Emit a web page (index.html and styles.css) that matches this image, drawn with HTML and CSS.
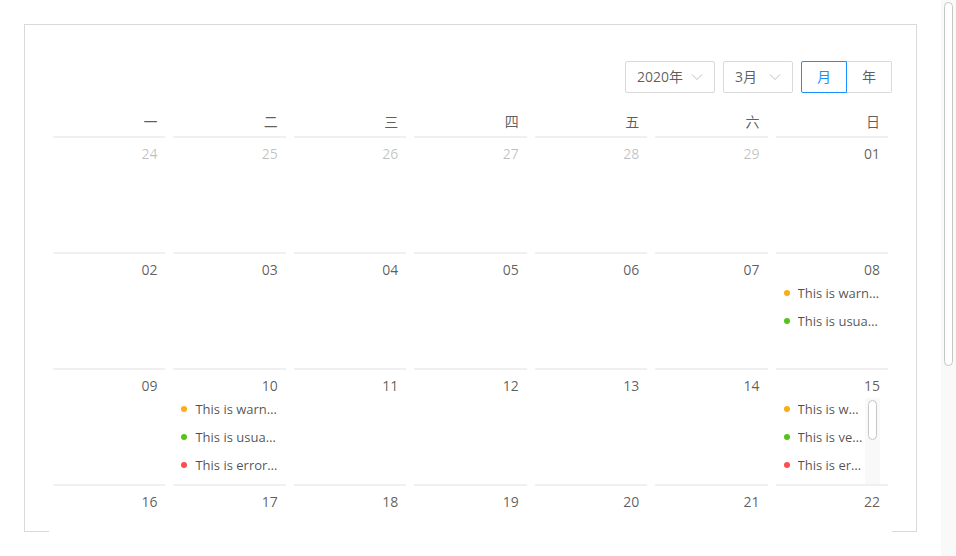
FILE: index.html
```html
<!DOCTYPE html>
<html lang="zh">
<head>
<meta charset="utf-8">
<title>Calendar</title>
<link rel="stylesheet" href="styles.css">
</head>
<body>
<div class="page">
  <div class="box">
    <div class="calendar">
      <div class="cal-header">
        <div class="select select-year"><span class="select-text">2020年</span><svg class="chev" width="12" height="12" viewBox="0 0 12 12"><polyline points="1,3.5 6,8.5 11,3.5" fill="none" stroke="#bfbfbf" stroke-width="1"/></svg></div>
        <div class="select select-month"><span class="select-text">3月</span><svg class="chev" width="12" height="12" viewBox="0 0 12 12"><polyline points="1,3.5 6,8.5 11,3.5" fill="none" stroke="#bfbfbf" stroke-width="1"/></svg></div>
        <div class="radio-group">
          <span class="radio-btn radio-checked">月</span>
          <span class="radio-btn">年</span>
        </div>
      </div>
      <div class="cal-body">
        <div class="grid">
          <div class="th">一</div><div class="th">二</div><div class="th">三</div><div class="th">四</div><div class="th">五</div><div class="th">六</div><div class="th">日</div>

          <div class="cell muted"><div class="val">24</div><div class="content"></div></div>
          <div class="cell muted"><div class="val">25</div><div class="content"></div></div>
          <div class="cell muted"><div class="val">26</div><div class="content"></div></div>
          <div class="cell muted"><div class="val">27</div><div class="content"></div></div>
          <div class="cell muted"><div class="val">28</div><div class="content"></div></div>
          <div class="cell muted"><div class="val">29</div><div class="content"></div></div>
          <div class="cell"><div class="val">01</div><div class="content"></div></div>

          <div class="cell"><div class="val">02</div><div class="content"></div></div>
          <div class="cell"><div class="val">03</div><div class="content"></div></div>
          <div class="cell"><div class="val">04</div><div class="content"></div></div>
          <div class="cell"><div class="val">05</div><div class="content"></div></div>
          <div class="cell"><div class="val">06</div><div class="content"></div></div>
          <div class="cell"><div class="val">07</div><div class="content"></div></div>
          <div class="cell"><div class="val">08</div><div class="content">
            <ul class="events">
              <li class="ev"><span class="dot warning"></span><span class="ev-text">This is warning event.</span></li>
              <li class="ev"><span class="dot success"></span><span class="ev-text">This is usual event.</span></li>
            </ul>
          </div></div>

          <div class="cell"><div class="val">09</div><div class="content"></div></div>
          <div class="cell"><div class="val">10</div><div class="content">
            <ul class="events">
              <li class="ev"><span class="dot warning"></span><span class="ev-text">This is warning event.</span></li>
              <li class="ev"><span class="dot success"></span><span class="ev-text">This is usual event.</span></li>
              <li class="ev"><span class="dot error"></span><span class="ev-text">This is error event.</span></li>
            </ul>
          </div></div>
          <div class="cell"><div class="val">11</div><div class="content"></div></div>
          <div class="cell"><div class="val">12</div><div class="content"></div></div>
          <div class="cell"><div class="val">13</div><div class="content"></div></div>
          <div class="cell"><div class="val">14</div><div class="content"></div></div>
          <div class="cell"><div class="val">15</div><div class="content content-scroll">
            <ul class="events events-clip">
              <li class="ev"><span class="dot warning"></span><span class="ev-text">This is warning event</span></li>
              <li class="ev"><span class="dot success"></span><span class="ev-text">This is very long usual event。。....</span></li>
              <li class="ev"><span class="dot error"></span><span class="ev-text">This is error event 1.</span></li>
              <li class="ev"><span class="dot error"></span><span class="ev-text">This is error event 2.</span></li>
              <li class="ev"><span class="dot error"></span><span class="ev-text">This is error event 3.</span></li>
              <li class="ev"><span class="dot error"></span><span class="ev-text">This is error event 4.</span></li>
            </ul>
            <div class="mini-track"><div class="mini-thumb"></div></div>
          </div></div>

          <div class="cell"><div class="val">16</div><div class="content"></div></div>
          <div class="cell"><div class="val">17</div><div class="content"></div></div>
          <div class="cell"><div class="val">18</div><div class="content"></div></div>
          <div class="cell"><div class="val">19</div><div class="content"></div></div>
          <div class="cell"><div class="val">20</div><div class="content"></div></div>
          <div class="cell"><div class="val">21</div><div class="content"></div></div>
          <div class="cell"><div class="val">22</div><div class="content"></div></div>

          <div class="cell"><div class="val">23</div><div class="content"></div></div>
          <div class="cell"><div class="val">24</div><div class="content"></div></div>
          <div class="cell"><div class="val">25</div><div class="content"></div></div>
          <div class="cell"><div class="val">26</div><div class="content"></div></div>
          <div class="cell"><div class="val">27</div><div class="content"></div></div>
          <div class="cell"><div class="val">28</div><div class="content"></div></div>
          <div class="cell"><div class="val">29</div><div class="content"></div></div>

          <div class="cell"><div class="val">30</div><div class="content"></div></div>
          <div class="cell"><div class="val">31</div><div class="content"></div></div>
          <div class="cell muted"><div class="val">01</div><div class="content"></div></div>
          <div class="cell muted"><div class="val">02</div><div class="content"></div></div>
          <div class="cell muted"><div class="val">03</div><div class="content"></div></div>
          <div class="cell muted"><div class="val">04</div><div class="content"></div></div>
          <div class="cell muted"><div class="val">05</div><div class="content"></div></div>
        </div>
      </div>
    </div>
  </div>
</div>
<div class="vscroll"><div class="vthumb"></div></div>
</body>
</html>
```

FILE: styles.css
```css
html, body {
  margin: 0;
  padding: 0;
  background: #fff;
  height: 556px;
  overflow: hidden;
}

body {
  display: flex;
  font-family: "Open Sans", "Noto Sans CJK SC", sans-serif;
  font-size: 14px;
  color: rgba(0, 0, 0, 0.65);
}

.page {
  flex: 1;
  min-width: 0;
  height: 556px;
  overflow: hidden;
  box-sizing: border-box;
  padding: 24px;
}

.vscroll {
  flex: none;
  box-sizing: border-box;
  width: 15px;
  height: 556px;
  background: #f9f9f9;
  padding: 2px 3px 0 3px;
}

.vthumb {
  box-sizing: border-box;
  height: 364px;
  border: 1px solid #c6c6c6;
  border-radius: 5px;
  background: #fff;
}

.box {
  box-sizing: border-box;
  height: 508px;
  border: 1px solid #d9d9d9;
  padding: 24px;
}

.calendar {
  background: #fff;
}

.cal-header {
  display: flex;
  justify-content: flex-end;
  gap: 8px;
  padding: 12px 0;
}

.select {
  box-sizing: border-box;
  height: 32px;
  border: 1px solid #d9d9d9;
  border-radius: 2px;
  padding: 0 11px;
  display: flex;
  align-items: center;
  justify-content: space-between;
  line-height: 30px;
}

.select-year {
  width: 90px;
}

.select-month {
  width: 70px;
}

.chev {
  display: block;
  flex: none;
}

.radio-group {
  display: flex;
}

.radio-btn {
  box-sizing: border-box;
  height: 32px;
  line-height: 30px;
  padding: 0 15px;
  border: 1px solid #d9d9d9;
  border-left-width: 0;
  border-radius: 0 2px 2px 0;
}

.radio-checked {
  border-color: #1890ff;
  border-left-width: 1px;
  border-radius: 2px 0 0 2px;
  color: #1890ff;
}

.cal-body {
  padding: 8px 0;
}

.grid {
  display: grid;
  grid-template-columns: repeat(7, 1fr);
}

.th {
  text-align: right;
  padding: 0 12px 5px 0;
  line-height: 18px;
}

.cell {
  margin: 0 4px;
  padding: 4px 8px 0;
  border-top: 2px solid #f0f0f0;
  text-align: right;
  min-width: 0;
}

.muted {
  color: rgba(0, 0, 0, 0.25);
}

.val {
  line-height: 24px;
}

.content {
  height: 86px;
  overflow: hidden;
  text-align: left;
  line-height: 22px;
}

.content-scroll {
  display: flex;
}

.events {
  list-style: none;
  margin: 0;
  padding: 0;
}

.events-clip {
  flex: 1;
  min-width: 0;
  overflow: hidden;
}

.mini-track {
  flex: none;
  box-sizing: border-box;
  width: 15px;
  height: 86px;
  background: #f9f9f9;
  padding: 2px 3px 0 3px;
}

.mini-thumb {
  box-sizing: border-box;
  height: 40px;
  border: 1px solid #c6c6c6;
  border-radius: 5px;
  background: #fff;
}

.ev {
  display: flex;
  align-items: center;
  height: 22px;
  margin-bottom: 6px;
  white-space: nowrap;
}

.dot {
  flex: none;
  width: 6px;
  height: 6px;
  border-radius: 50%;
}

.warning { background: #faad14; }
.success { background: #52c41a; }
.error { background: #ff4d4f; }

.ev-text {
  margin-left: 8px;
  min-width: 0;
  overflow: hidden;
  text-overflow: ellipsis;
  font-size: 13px;
  color: rgba(0, 0, 0, 0.7);
}
```
